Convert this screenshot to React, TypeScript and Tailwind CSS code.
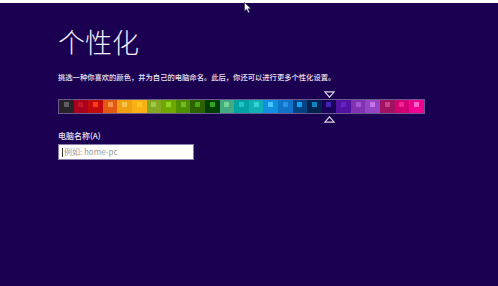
const swatches: [string, string][] = [
  ["#262428", "#5e5e62"],
  ["#a8001e", "#c2122c"],
  ["#c20a0e", "#ff3a12"],
  ["#e25a12", "#f59048"],
  ["#eea012", "#f8c44a"],
  ["#f8b012", "#ffc628"],
  ["#84a824", "#9ccc44"],
  ["#6ea800", "#92d424"],
  ["#4e9000", "#72bc22"],
  ["#2e6200", "#44a612"],
  ["#003e06", "#2ea420"],
  ["#44aa84", "#74d496"],
  ["#00a2a2", "#24c4c4"],
  ["#10b0b4", "#34d4d4"],
  ["#1290e0", "#48c4ff"],
  ["#1072c8", "#2494e4"],
  ["#024282", "#12a2f2"],
  ["#04224e", "#1282c2"],
  ["#1a0058", "#4424b4"],
  ["#5212a2", "#6424c4"],
  ["#8032b2", "#a454d4"],
  ["#9444c4", "#c474e4"],
  ["#a21262", "#c44484"],
  ["#d20072", "#f42494"],
  ["#f20092", "#ff66c4"],
];

const cjk = { fontFamily: '"Noto Sans CJK SC", "Noto Sans", sans-serif' };

function Triangle({ up }: { up?: boolean }) {
  return (
    <svg width="11" height="7" viewBox="0 0 11 7" className="block">
      <polygon
        points={up ? "5.5,0.8 10.2,6.2 0.8,6.2" : "0.8,0.8 10.2,0.8 5.5,6.2"}
        fill="#1a0050"
        stroke="#d8d4e4"
        strokeWidth="1.2"
      />
    </svg>
  );
}

export default function App() {
  return (
    <div className="relative w-[498px] h-[286px] overflow-hidden bg-[#1b0052] text-white" style={cjk}>
      <div className="h-[3px] bg-white" />
      <svg width="8" height="12" viewBox="0 0 8 12" className="absolute left-[244px] top-[2px]">
        <polygon points="0.5,0.5 0.5,9 2.6,7.2 4.2,10.8 5.6,10.2 4.1,6.7 7,6.7" fill="#ffffff" stroke="#2a2a40" strokeWidth="0.6" />
      </svg>
      <div className="pl-[58px] pt-[21px] flex flex-col">
        <h1 className="text-[27px] leading-[36px] font-light text-[#f0eef8]">个性化</h1>
        <p className="mt-[12px] text-[7.3px] font-medium leading-[10px] text-[#e6e2f0] whitespace-nowrap">
          挑选一种你喜欢的颜色，并为自己的电脑命名。此后，你还可以进行更多个性化设置。
        </p>
        <div className="relative mt-[17px] w-[367px]">
          <div className="absolute left-[265.5px] -top-[8px]">
            <Triangle />
          </div>
          <div className="flex h-[15px] border border-[#6a5a90]">
            {swatches.map(([bg, sq], i) => (
              <div key={i} className="flex-1 flex justify-center pt-[2px]" style={{ backgroundColor: bg }}>
                <div className="w-[5px] h-[5px]" style={{ backgroundColor: sq }} />
              </div>
            ))}
          </div>
          <div className="absolute left-[265.5px] top-[17px]">
            <Triangle up />
          </div>
        </div>
        <label className="mt-[17px] text-[8px] font-medium leading-[10px] text-[#e6e2f0]">电脑名称(A)</label>
        <div className="mt-[3px] w-[136px] h-[16px] bg-white border border-[#8a80b0] flex items-center pl-[3px]">
          <div className="w-px h-[9px] bg-[#333]" />
          <span className="ml-px text-[8px] leading-[10px] text-[#9a9a9a]">例如: home-pc</span>
        </div>
      </div>
    </div>
  );
}
